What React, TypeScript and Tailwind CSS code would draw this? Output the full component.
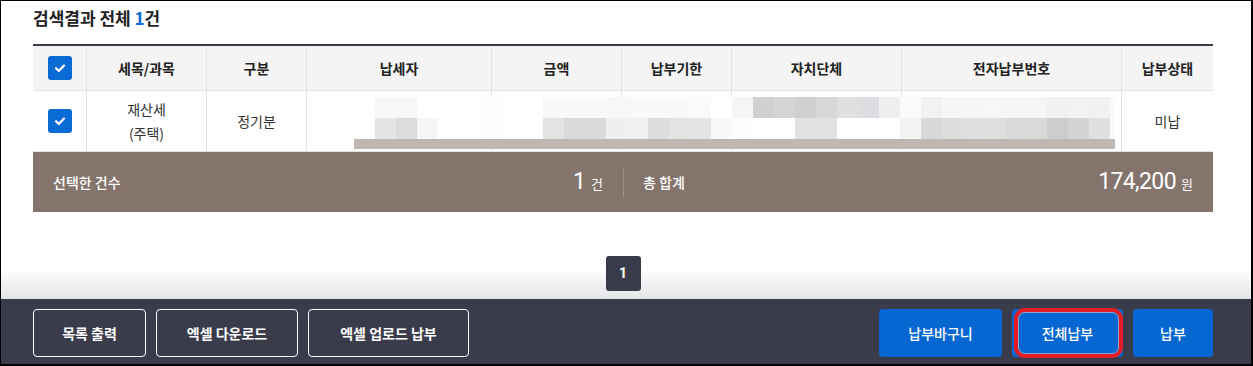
import React from "react";

const row1 = [
  "bg-[#f8f8f8]", "bg-[#f8f8f8]", "bg-[#ffffff]", "bg-[#ffffff]", "bg-[#ffffff]", "bg-[#fdfdfd]", "bg-[#ffffff]", "bg-[#ffffff]",
  "bg-[#f9f9f9]", "bg-[#f9f9f9]", "bg-[#f9f9f9]", "bg-[#f7f7f7]", "bg-[#f9f9f9]", "bg-[#f9f9f9]", "bg-[#f9f9f9]", "bg-[#fafafa]",
  "bg-[#ffffff]", "bg-[#f6f5f3]", "bg-[#d0d1d3]", "bg-[#d5d5d5]", "bg-[#d0d0d0]", "bg-[#d8d8d7]", "bg-[#e1e0de]", "bg-[#dcdde0]",
  "bg-[#eef0ef]", "bg-[#fbfbf9]", "bg-[#f2f2f2]", "bg-[#f6f6f6]", "bg-[#f6f6f6]", "bg-[#f7f7f7]", "bg-[#f6f6f6]", "bg-[#f6f6f6]",
  "bg-[#f0f1f1]", "bg-[#f2f2f2]", "bg-[#f1f1f1]", "bg-[#fafafa]",
];
const row2 = [
  "bg-[#e4e4e4]", "bg-[#dcdcdc]", "bg-[#f5f7f6]", "bg-[#ffffff]", "bg-[#ffffff]", "bg-[#fdfdfd]", "bg-[#ffffff]", "bg-[#ffffff]",
  "bg-[#e3e3e2]", "bg-[#dadada]", "bg-[#dadada]", "bg-[#efefef]", "bg-[#f0f0f0]", "bg-[#dcdedd]", "bg-[#e4e3e1]", "bg-[#e4e4e4]",
  "bg-[#f8f9fb]", "bg-[#fdfdfd]", "bg-[#ffffff]", "bg-[#ffffff]", "bg-[#e1e1e1]", "bg-[#e1e1e1]", "bg-[#ffffff]", "bg-[#ffffff]",
  "bg-[#ffffff]", "bg-[#f3f3f1]", "bg-[#d7d9d8]", "bg-[#dedddb]", "bg-[#e0dfdf]", "bg-[#dfdfde]", "bg-[#d9dbda]", "bg-[#dbd9d7]",
  "bg-[#cdcdcd]", "bg-[#d3d3d3]", "bg-[#dfe0e2]", "bg-[#fafafa]",
];

function Check() {
  return (
    <div className="w-[24px] h-[24px] rounded-[3px] bg-[#0b6bd4] flex items-center justify-center">
      <svg width="14" height="14" viewBox="0 0 14 14" fill="none">
        <path d="M3 7.2l2.8 2.8L11 4.6" stroke="white" strokeWidth="2.2" strokeLinecap="round" strokeLinejoin="round" />
      </svg>
    </div>
  );
}

const cols = "grid grid-cols-[54px_120px_100px_185px_130px_110px_170px_220px_91px]";
const headers = ["세목/과목", "구분", "납세자", "금액", "납부기한", "자치단체", "전자납부번호", "납부상태"];

export default function App() {
  return (
    <div
      className="w-[1253px] h-[366px] border-t border-l border-r-2 border-b-2 border-black flex flex-col bg-white overflow-hidden"
      style={{ fontFamily: '"Noto Sans CJK KR", "Noto Sans", sans-serif' }}
    >
      <div className="flex-1 flex flex-col pl-[32px] pr-[38px] pt-[5px] bg-linear-to-b from-white from-90% to-[#e2e4e6]">
        <h2 className="text-[17px] leading-[24px] font-bold text-[#222]">
          검색결과 전체 <span className="text-[#0d6ad1]">1</span>건
        </h2>

        <div className="mt-[14px] border-t-2 border-[#3b3c4a]">
          <div className={`${cols} h-[45px] bg-[#f4f4f4] border-b border-[#e3e3e3] text-[14px] font-bold text-[#222]`}>
            <div className="flex items-center justify-center border-r border-[#e3e3e3]">
              <Check />
            </div>
            {headers.map((h, i) => (
              <div
                key={h}
                className={`flex items-center justify-center ${i < headers.length - 1 ? "border-r border-[#e3e3e3]" : ""}`}
              >
                {h}
              </div>
            ))}
          </div>

          <div className={`${cols} relative h-[61px] border-b border-[#e3e3e3] text-[14px] text-[#333]`}>
            <div className="flex items-center justify-center border-r border-[#e3e3e3]">
              <Check />
            </div>
            <div className="flex flex-col items-center justify-center border-r border-[#e3e3e3] leading-[24px]">
              <span>재산세</span>
              <span>(주택)</span>
            </div>
            <div className="flex items-center justify-center border-r border-[#e3e3e3]">정기분</div>
            <div className="border-r border-[#e3e3e3]" />
            <div className="border-r border-[#e3e3e3]" />
            <div className="border-r border-[#e3e3e3]" />
            <div className="border-r border-[#e3e3e3]" />
            <div className="border-r border-[#e3e3e3]" />
            <div className="flex items-center justify-center">미납</div>

            {/* redaction mosaic overlay */}
            <div className="absolute left-[321px] top-[6px] flex flex-col">
              <div className="flex pl-[21px]">
                {row1.map((c, i) => (
                  <div key={i} className={`${c} ${i === 35 ? "w-[5px]" : "w-[21px]"} h-[21px]`} />
                ))}
              </div>
              <div className="flex pl-[21px]">
                {row2.map((c, i) => (
                  <div key={i} className={`${c} ${i === 35 ? "w-[5px]" : "w-[21px]"} h-[21px]`} />
                ))}
              </div>
              <div className="w-[761px] h-[10px] bg-[#c0b6b2]" />
            </div>
          </div>

          <div className="grid grid-cols-2 h-[60px] bg-[#84746b] text-white">
            <div className="flex items-center justify-between px-[20px]">
              <span className="text-[14px] font-medium">선택한 건수</span>
              <span className="flex items-baseline">
                <span className="text-[23px] leading-none" style={{ fontFamily: "Roboto, sans-serif" }}>1</span>
                <span className="text-[13px] ml-[5px]">건</span>
              </span>
            </div>
            <div className="flex items-center">
              <div className="w-px h-[30px] bg-[#9b8e86]" />
              <div className="flex-1 flex items-center justify-between pl-[19px] pr-[20px]">
                <span className="text-[14px] font-medium">총 합계</span>
                <span className="flex items-baseline">
                  <span className="text-[23px] leading-none tracking-[-0.6px]" style={{ fontFamily: "Roboto, sans-serif" }}>174,200</span>
                  <span className="text-[13px] ml-[5px]">원</span>
                </span>
              </div>
            </div>
          </div>
        </div>

        <div className="mt-[44px] flex justify-center">
          <button className="w-[35px] h-[35px] rounded-[3px] bg-[#3a3b4a] text-white text-[14px] font-bold flex items-center justify-center" style={{ fontFamily: "Roboto, sans-serif" }}>
            1
          </button>
        </div>
      </div>

      <div className="h-[65px] bg-[#3b3c4b] flex items-start justify-between pl-[32px] pr-[38px] pt-[10px]">
        <div className="flex gap-[10px]">
          <button className="w-[113px] h-[48px] rounded-[4px] border border-white text-white text-[14px] font-bold">목록 출력</button>
          <button className="w-[142px] h-[48px] rounded-[4px] border border-white text-white text-[14px] font-bold">엑셀 다운로드</button>
          <button className="w-[161px] h-[48px] rounded-[4px] border border-white text-white text-[14px] font-bold">엑셀 업로드 납부</button>
        </div>
        <div className="flex gap-[10px]">
          <button className="w-[123px] h-[48px] rounded-[4px] bg-[#0767d2] text-white text-[14px] font-medium">납부바구니</button>
          <button className="relative w-[111px] h-[48px] rounded-[4px] bg-[#0767d2] text-white text-[14px] font-medium">
            전체납부
            <span className="absolute left-[2px] right-0 -top-px -bottom-px rounded-[11px] border-[4px] border-[#e31c26]">
              <span className="absolute inset-0 rounded-[7px] border border-[#8ea6cf]" />
            </span>
          </button>
          <button className="w-[80px] h-[48px] rounded-[4px] bg-[#0767d2] text-white text-[14px] font-medium">납부</button>
        </div>
      </div>
    </div>
  );
}
